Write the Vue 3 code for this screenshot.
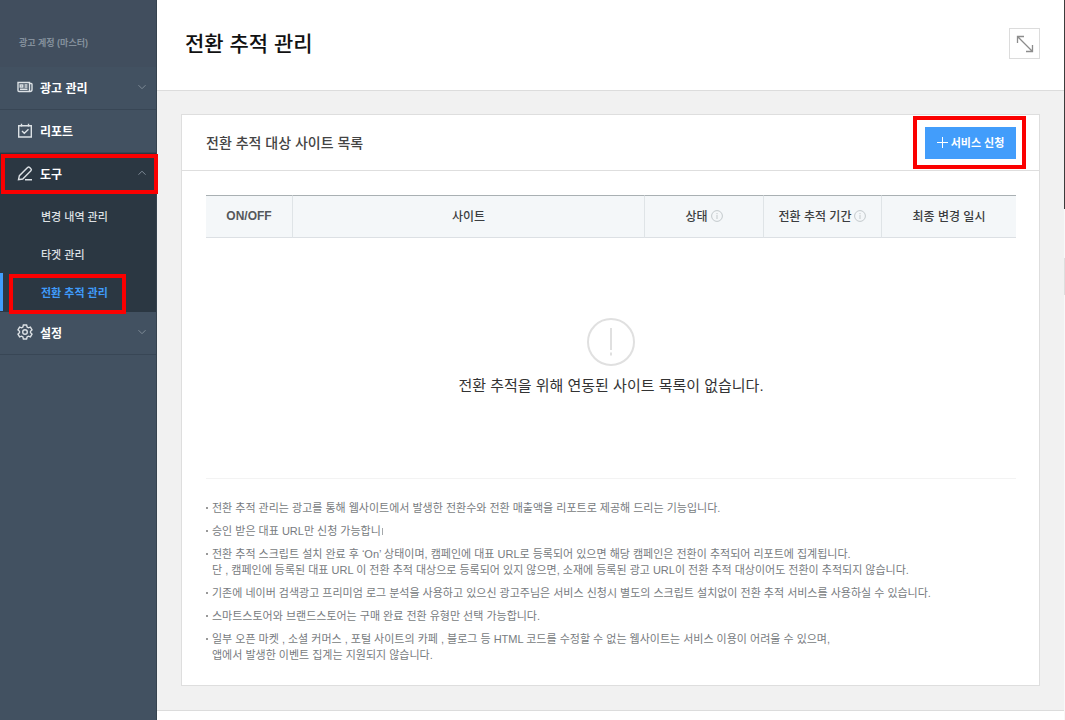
<script setup>
const columns = [
  { label: 'ON/OFF', cls: 'col-switch' },
  { label: '사이트', cls: 'col-site' },
  { label: '상태', cls: 'col-state', info: true },
  { label: '전환 추적 기간', cls: 'col-period', info: true },
  { label: '최종 변경 일시', cls: 'col-date' },
]
const subItems = [
  { label: '변경 내역 관리' },
  { label: '타겟 관리' },
  { label: '전환 추적 관리', active: true },
]
</script>

<template>
  <div class="shell">
    <aside class="sidebar">
      <p class="account">광고 계정 (마스터)</p>
      <nav class="menu" aria-label="주 메뉴">
        <button type="button" class="item">
          <svg class="icon" viewBox="0 0 16 16" aria-hidden="true">
            <path d="M1 3.5h11.5v9H2a1 1 0 0 1-1-1zM12.5 4.500h1.700a.8.8 0 0 1 .8.8v5.200a2 2 0 0 1-2 2h-1" />
            <path d="M3.2 6h2.6v2H3.2zM7.5 6h3M7.5 8h3M3 10.3h7.5" />
          </svg>
          <span>광고 관리</span>
          <svg class="arrow" viewBox="0 0 8 8" aria-hidden="true"><path d="M.5 2.2 4 5.7l3.500-3.500" /></svg>
        </button>
        <a href="#report" class="item">
          <svg class="icon" viewBox="0 0 16 16" aria-hidden="true">
            <path d="M1.700 3.700h12.600v11.300H1.700zM4.500 1.700v3M11.500 1.700v3M5 9l2.300 2.300L11.500 7.200" />
          </svg>
          <span>리포트</span>
        </a>
        <div class="group">
          <button type="button" class="item open" aria-expanded="true">
            <svg class="icon" viewBox="0 0 16 16" aria-hidden="true">
              <path d="M1.500 14.700l.9-4L10.600 2.500a1.500 1.500 0 0 1 2.100 0l1.200 1.200a1.500 1.500 0 0 1 0 2.100l-8.200 8.200zM8 14.800h7" />
            </svg>
            <span>도구</span>
            <svg class="arrow" viewBox="0 0 8 8" aria-hidden="true"><path d="M.5 5.700 4 2.200l3.500 3.500" /></svg>
            <i class="mark mark-item"></i>
          </button>
          <ul class="submenu">
            <li v-for="s in subItems" :key="s.label">
              <a href="#tools" class="sub" :class="{ active: s.active }">{{ s.label }}</a>
              <i v-if="s.active" class="mark mark-sub"></i>
            </li>
          </ul>
        </div>
        <button type="button" class="item">
          <svg class="icon" viewBox="0 0 16 16" aria-hidden="true">
            <path d="M6.400 1h3.200l.5 2 1.300.8 2-.6 1.600 2.700-1.500 1.400v1.400l1.500 1.400-1.600 2.700-2-.6-1.300.8-.5 2H6.400l-.5-2-1.300-.8-2 .6L1 10.100l1.500-1.400V7.300L1 5.900l1.600-2.700 2 .6L5.900 3z" />
            <circle cx="8" cy="8" r="2.300" />
          </svg>
          <span>설정</span>
          <svg class="arrow" viewBox="0 0 8 8" aria-hidden="true"><path d="M.5 2.200 4 5.700l3.500-3.500" /></svg>
        </button>
      </nav>
    </aside>

    <div class="page">
      <header class="top">
        <h1>전환 추적 관리</h1>
        <button type="button" class="expand" aria-label="확대">
          <svg viewBox="0 0 18 18" aria-hidden="true"><path d="M1.500 8V1.500H8M1.500 1.500l15 15M10 16.500h6.500V10" /></svg>
        </button>
      </header>

      <main class="content">
        <section class="card">
          <div class="card-head">
            <h2>전환 추적 대상 사이트 목록</h2>
            <button type="button" class="apply">
              <svg viewBox="0 0 11 11" aria-hidden="true"><path d="M5.500 0v11M0 5.500h11" /></svg>
              <span>서비스 신청</span>
              <i class="mark mark-apply"></i>
            </button>
          </div>
          <div class="card-body">
            <table>
              <thead>
                <tr>
                  <th v-for="c in columns" :key="c.label" :class="c.cls" scope="col">
                    <div class="th">
                      <span>{{ c.label }}</span>
                      <svg v-if="c.info" viewBox="0 0 12 12" aria-hidden="true">
                        <circle cx="6" cy="6" r="5.400" />
                        <path d="M6 3v1.200M6 5v4" />
                      </svg>
                    </div>
                  </th>
                </tr>
              </thead>
              <tbody>
                <tr>
                  <td colspan="5">
                    <svg viewBox="0 0 48 48" aria-hidden="true">
                      <circle cx="24" cy="24" r="23" />
                      <path d="M24 10v22M24 34.500v3" />
                    </svg>
                    <p>전환 추적을 위해 연동된 사이트 목록이 없습니다.</p>
                  </td>
                </tr>
              </tbody>
            </table>
            <ul class="notes">
              <li>전환 추적 관리는 광고를 통해 웹사이트에서 발생한 전환수와 전환 매출액을 리포트로 제공해 드리는 기능입니다.</li>
              <li>승인 받은 대표 URL만 신청 가능합니<i class="stroke"></i></li>
              <li>전환 추적 스크립트 설치 완료 후 ‘On’ 상태이며, 캠페인에 대표 URL로 등록되어 있으면 해당 캠페인은 전환이 추적되어 리포트에 집계됩니다.<br>단 , 캠페인에 등록된 대표 URL 이 전환 추적 대상으로 등록되어 있지 않으면, 소재에 등록된 광고 URL이 전환 추적 대상이어도 전환이 추적되지 않습니다.</li>
              <li>기존에 네이버 검색광고 프리미엄 로그 분석을 사용하고 있으신 광고주님은 서비스 신청시 별도의 스크립트 설치없이 전환 추적 서비스를 사용하실 수 있습니다.</li>
              <li>스마트스토어와 브랜드스토어는 구매 완료 전환 유형만 선택 가능합니다.</li>
              <li>일부 오픈 마켓 , 소셜 커머스 , 포털 사이트의 카페 , 블로그 등 HTML 코드를 수정할 수 없는 웹사이트는 서비스 이용이 어려울 수 있으며,<br>앱에서 발생한 이벤트 집계는 지원되지 않습니다.</li>
            </ul>
          </div>
        </section>
      </main>
      <footer class="bottom"></footer>
    </div>
    <div class="edge"></div>
  </div>
</template>

<style>
body { background: #fff; }
</style>

<style scoped>
* { box-sizing: border-box; }
.shell {
  display: flex;
  min-height: 100vh;
  font-family: "Liberation Sans", "Noto Sans CJK KR", sans-serif;
  color: #333;
}
h1, h2, p, ul { margin: 0; padding: 0; }
ul { list-style: none; }
button { font: inherit; color: inherit; border: 0; padding: 0; background: none; cursor: pointer; }
a { color: inherit; text-decoration: none; }
svg { fill: none; stroke: currentColor; flex: none; }

.sidebar {
  flex: 0 0 157px;
  background: #425161;
  border-right: 1px solid #36434f;
  color: #fff;
}
.account { height: 67px; padding: 35px 0 0 19px; font-size: 9px; line-height: 16px; font-weight: 700; color: #84909c; background: #414e5e; }
.item {
  position: relative;
  display: flex;
  align-items: center;
  gap: 7px;
  width: 100%;
  height: 43px;
  padding: 0 10px 2px 17px;
  border-bottom: 1px solid #384655;
  font-size: 12px;
  font-weight: 700;
  text-align: left;
}
.icon { width: 16px; height: 16px; stroke: #dce1e5; stroke-width: 1.4; }
.arrow { width: 8px; height: 8px; margin-left: auto; stroke: #7f8b97; }
.group { background: #2b3742; }
.group .item { border-bottom-color: #2b3742; }
.submenu { padding: 1px 0; }
.submenu li { position: relative; }
.sub {
  display: flex;
  align-items: center;
  height: 38px;
  padding: 0 0 1px 41px;
  font-size: 11px;
  font-weight: 500;
  color: #dde0e3;
}
.sub.active { padding-left: 38px; border-left: 3px solid #429dfb; color: #3f9bfa; font-weight: 700; }

.mark { position: absolute; border: 4px solid #fb0000; pointer-events: none; z-index: 1; }
.mark-item { inset: 1px -2px 1px 1px; }
.mark-sub { inset: 1px 30px -3px 9px; }
.mark-apply { inset: -11px -10px -10px -12px; }

.page { flex: 1; min-width: 0; display: flex; flex-direction: column; }
.top {
  display: flex;
  align-items: center;
  justify-content: space-between;
  height: 91px;
  padding: 0 24px 3px 28px;
  border-bottom: 1px solid #dcdcdc;
}
h1 { font-size: 21px; font-weight: 500; line-height: 32px; color: #111; }
.expand { width: 31px; height: 31px; display: grid; place-items: center; border: 1px solid #dcdcdc; color: #8c8c8c; }
.expand svg { width: 18px; height: 18px; stroke-width: 1.3; }

.content { padding: 23px 24px 24px; background: #f1f1f1; }
.card { background: #fff; border: 1px solid #dedede; }
.card-head {
  display: flex;
  align-items: center;
  justify-content: space-between;
  height: 56px;
  padding: 0 23px 0 24px;
  border-bottom: 1px solid #dedede;
}
h2 { font-size: 14px; font-weight: 500; line-height: 20px; color: #444; }
.apply {
  position: relative;
  display: flex;
  align-items: center;
  justify-content: center;
  gap: 3px;
  width: 91px;
  height: 32px;
  padding-bottom: 1px;
  background: #429dfb;
  color: #fff;
  font-size: 11px;
  font-weight: 700;
}
.apply svg { width: 11px; height: 11px; }
.card-body { padding: 24px 23px 22px 24px; }

table { width: 100%; border-collapse: separate; border-spacing: 0; table-layout: fixed; }
th {
  height: 43px;
  padding: 0 0 2px;
  background: #f4f7f9;
  border-top: 1px solid #a9b0b3;
  border-bottom: 1px solid #dce0e4;
  border-right: 1px solid #dfe4e7;
  font-size: 12px;
  font-weight: 500;
  color: #3b3d40;
}
th:last-child { border-right: 0; }
.th { display: flex; align-items: center; justify-content: center; gap: 3px; }
.th svg { width: 12px; height: 12px; stroke: #c3c9cc; }
.col-switch { width: 87px; font-weight: 700; color: #55585b; }
.col-state { width: 119px; }
.col-period { width: 118px; }
.col-date { width: 134px; }
td { height: 241px; padding: 0 0 2px; border-bottom: 1px solid #f3f3f3; text-align: center; }
td svg { display: block; width: 48px; height: 48px; margin: 0 auto 9px; stroke: #e0e0e0; stroke-width: 2; }
td p { font-size: 15px; line-height: 22px; color: #333; }

.notes { display: flex; flex-direction: column; gap: 7px; margin-top: 21px; font-size: 11px; line-height: 16px; color: #777b80; }
.notes li { position: relative; padding-left: 6px; }
.notes li::before { content: ""; position: absolute; left: 0; top: 7px; width: 2px; height: 2px; background: #999; }
.stroke { display: inline-block; width: 1px; height: 7px; margin-left: 1px; background: #a5a8ab; }

.bottom { flex: 1; border-top: 1px solid #dcdcdc; background: #fff; }
.edge { flex: 0 0 1px; background: linear-gradient(#3c3c3c 0 209px, #f8f8f8 209px 258px, #dedede 258px 295px, #f8f8f8 295px); }
</style>
